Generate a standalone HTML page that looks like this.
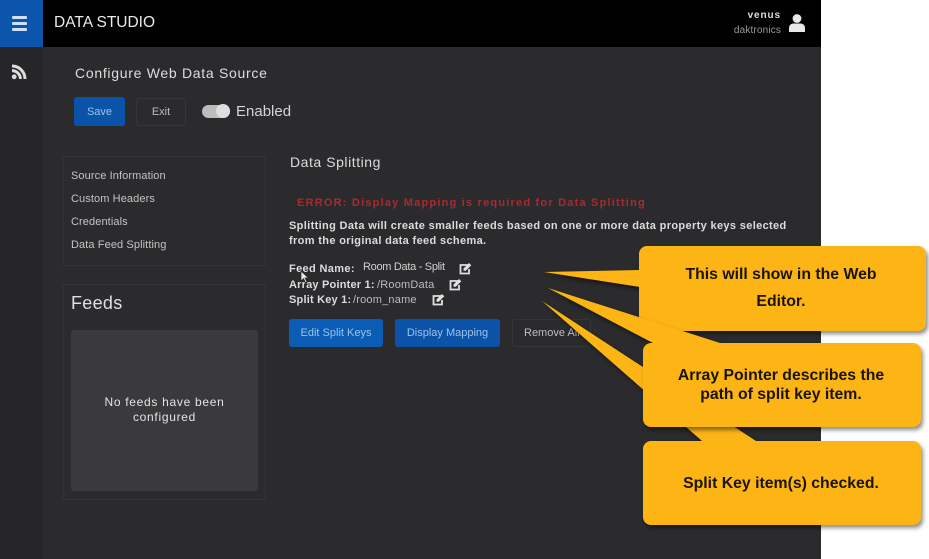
<!DOCTYPE html>
<html><head><meta charset="utf-8">
<style>
html,body{margin:0;padding:0;background:#fff}
body{width:929px;height:559px;overflow:hidden;position:relative;font-family:"Liberation Sans",sans-serif}
.a{position:absolute;white-space:nowrap}
#app{position:absolute;left:0;top:0;width:821px;height:559px;background:#2b2b2d;filter:blur(.35px)}
#side{position:absolute;left:0;top:47px;width:43px;height:512px;background:#262628}
#top{position:absolute;left:0;top:0;width:821px;height:47px;background:#000}
#burger{position:absolute;left:0;top:0;width:43px;height:47px;background:#0b55ac}
#burger i{position:absolute;left:12px;width:15px;height:3px;background:#cfe0f2;border-radius:1px}
.panel{position:absolute;border:1px solid #333335;box-sizing:border-box}
.nav{color:#c4c4c4;font-size:11px;letter-spacing:.1px}
.btn{position:absolute;box-sizing:border-box;font-size:11px;text-align:center;border-radius:3px}
.blue{background:#0b53a8;color:#9cc3ea}
.ghost{border:1px solid #363638;color:#bdbdbd}
.lbl{color:#dcdcdc;font-size:11px;font-weight:bold;letter-spacing:.35px}
.val{color:#bcbcbc;font-size:11px;letter-spacing:.2px}
</style></head>
<body>
<div id="app">
  <div id="side"></div>
  <div id="top"></div>
  <div id="burger"><i style="top:16px"></i><i style="top:22px"></i><i style="top:28px"></i></div>
  <div class="a" style="left:54px;top:14px;color:#eaeaea;font-size:15.5px;line-height:18px">DATA STUDIO</div>
  <div class="a" style="right:40px;top:10px;color:#dedede;font-size:10px;font-weight:bold;letter-spacing:.9px;line-height:12px">venus</div>
  <div class="a" style="right:40px;top:25px;color:#9a9a9a;font-size:10px;letter-spacing:.15px;line-height:12px">daktronics</div>
  <svg class="a" style="left:788px;top:13px" width="18" height="20" viewBox="0 0 18 20"><circle cx="9" cy="5.500" r="4.400" fill="#e8e8e8"/><path d="M1 19v-4c0-3 2.500-4.500 4.500-4.500h7c2 0 4.500 1.500 4.500 4.500v4z" fill="#e8e8e8"/></svg>
  <svg class="a" style="left:11px;top:64px" width="16" height="16" viewBox="0 0 16 16"><circle cx="3.200" cy="12.800" r="2.400" fill="#dcdcdc"/><path d="M1 6.600a8.400 8.400 0 0 1 8.400 8.400M1 2a13 13 0 0 1 13 13" fill="none" stroke="#dcdcdc" stroke-width="3"/></svg>

  <div class="a" style="left:75px;top:65px;color:#dedede;font-size:14px;letter-spacing:.71px;line-height:17px">Configure Web Data Source</div>
  <div class="btn blue" style="left:74px;top:97px;width:51px;height:29px;line-height:30px;">Save</div>
  <div class="btn ghost" style="left:136px;top:98px;width:50px;height:28px;line-height:27px">Exit</div>
  <div class="a" style="left:202px;top:105px;width:28px;height:13px;border-radius:7px;background:#bdbdbd"></div>
  <div class="a" style="left:216px;top:104px;width:14px;height:14px;border-radius:50%;background:#dedede"></div>
  <div class="a" style="left:236px;top:102px;color:#d4d4d4;font-size:15px;line-height:19px">Enabled</div>

  <div class="panel" style="left:63px;top:156px;width:203px;height:110px"></div>
  <div class="a nav" style="left:71px;top:170px;line-height:13px">Source Information</div>
  <div class="a nav" style="left:71px;top:193px;line-height:13px">Custom Headers</div>
  <div class="a nav" style="left:71px;top:216px;line-height:13px">Credentials</div>
  <div class="a nav" style="left:71px;top:239px;line-height:13px">Data Feed Splitting</div>

  <div class="panel" style="left:63px;top:284px;width:203px;height:216px"></div>
  <div class="a" style="left:71px;top:293px;color:#e0e0e0;font-size:18px;letter-spacing:.3px;line-height:21px">Feeds</div>
  <div class="a" style="left:71px;top:330px;width:187px;height:161px;background:#3a3a3c;border-radius:3px"></div>
  <div class="a" style="left:71px;top:395px;width:187px;text-align:center;color:#e4e4e4;font-size:12px;letter-spacing:.7px;line-height:15px;white-space:normal">No feeds have been<br>configured</div>

  <div class="a" style="left:290px;top:154px;color:#dcdcdc;font-size:14px;letter-spacing:.55px;line-height:17px">Data Splitting</div>
  <div class="a" style="left:297px;top:197px;color:#a92a30;font-size:11px;font-weight:bold;letter-spacing:1.21px;line-height:13px">ERROR: Display Mapping is required for Data Splitting</div>
  <div class="a lbl" style="left:289px;top:219px;line-height:15px">Splitting Data will create smaller feeds based on one or more data property keys selected<br>from the original data feed schema.</div>

  <div class="a lbl" style="left:289px;top:263px;line-height:13px">Feed Name:</div>
  <div class="a val" style="left:363px;top:261px;line-height:13px;color:#d0d0d0;letter-spacing:-.3px">Room Data - Split</div>
  <div class="a lbl" style="left:289px;top:279px;line-height:13px;letter-spacing:.2px">Array Pointer 1:</div>
  <div class="a val" style="left:377px;top:279px;line-height:13px">/RoomData</div>
  <div class="a lbl" style="left:289px;top:294px;line-height:13px;letter-spacing:.2px">Split Key 1:</div>
  <div class="a val" style="left:353px;top:294px;line-height:13px">/room_name</div>

  <svg class="a" style="left:459px;top:262px" width="13" height="13" viewBox="0 0 13 13"><path d="M9 3H1.500v8.500H10V7" fill="none" stroke="#e0e0e0" stroke-width="1.800"/><path d="M4.500 6.500L10 1l2.300 2.300-5.500 5.500H4.500z" fill="#e0e0e0"/></svg>
  <svg class="a" style="left:449px;top:278px" width="13" height="13" viewBox="0 0 13 13"><path d="M9 3H1.500v8.500H10V7" fill="none" stroke="#e0e0e0" stroke-width="1.800"/><path d="M4.500 6.500L10 1l2.300 2.300-5.500 5.500H4.500z" fill="#e0e0e0"/></svg>
  <svg class="a" style="left:432px;top:293px" width="13" height="13" viewBox="0 0 13 13"><path d="M9 3H1.500v8.500H10V7" fill="none" stroke="#e0e0e0" stroke-width="1.800"/><path d="M4.500 6.500L10 1l2.300 2.300-5.500 5.500H4.500z" fill="#e0e0e0"/></svg>
  <svg class="a" style="left:300px;top:270px" width="10" height="14" viewBox="0 0 10 14"><path d="M1 1v10l2.500-2.300 2 4 1.500-.8-2-3.900H8.500z" fill="#e8e8e8" stroke="#222" stroke-width=".7"/></svg>

  <div class="btn blue" style="left:289px;top:319px;width:94px;height:28px;line-height:29px;background:#0b5cb4">Edit Split Keys</div>
  <div class="btn blue" style="left:395px;top:319px;width:105px;height:28px;line-height:29px">Display Mapping</div>
  <div class="btn ghost" style="left:512px;top:319px;width:79px;height:28px;line-height:27px;text-align:left;padding-left:11px;overflow:hidden">Remove All</div>
</div>

<svg class="a" style="left:0;top:0" width="929" height="559" viewBox="0 0 929 559">
  <g style="filter:drop-shadow(2px 3px 2px rgba(0,0,0,.45))">
    <path d="M542 301L702 441H756z" fill="#fdb515"/>
    <rect x="643" y="441" width="278" height="84" rx="8" fill="#fdb515"/>
  </g>
  <g style="filter:drop-shadow(2px 3px 2px rgba(0,0,0,.45))">
    <path d="M544 272L640 270V287z" fill="#fdb515"/>
    <rect x="639" y="246" width="287" height="85" rx="8" fill="#fdb515"/>
  </g>
  <g style="filter:drop-shadow(2px 3px 2px rgba(0,0,0,.45))">
    <path d="M548 288L720 343H653z" fill="#fdb515"/>
    <rect x="643" y="343" width="278" height="84" rx="8" fill="#fdb515"/>
  </g>
  <g font-family="'Liberation Sans',sans-serif" font-size="15.800" font-weight="bold" fill="#1a1408" text-anchor="middle">
    <text x="781" y="279">This will show in the Web</text>
    <text x="781" y="306">Editor.</text>
    <text x="781" y="380">Array Pointer describes the</text>
    <text x="781" y="399">path of split key item.</text>
    <text x="781" y="488">Split Key item(s) checked.</text>
  </g>
</svg>
</body></html>
